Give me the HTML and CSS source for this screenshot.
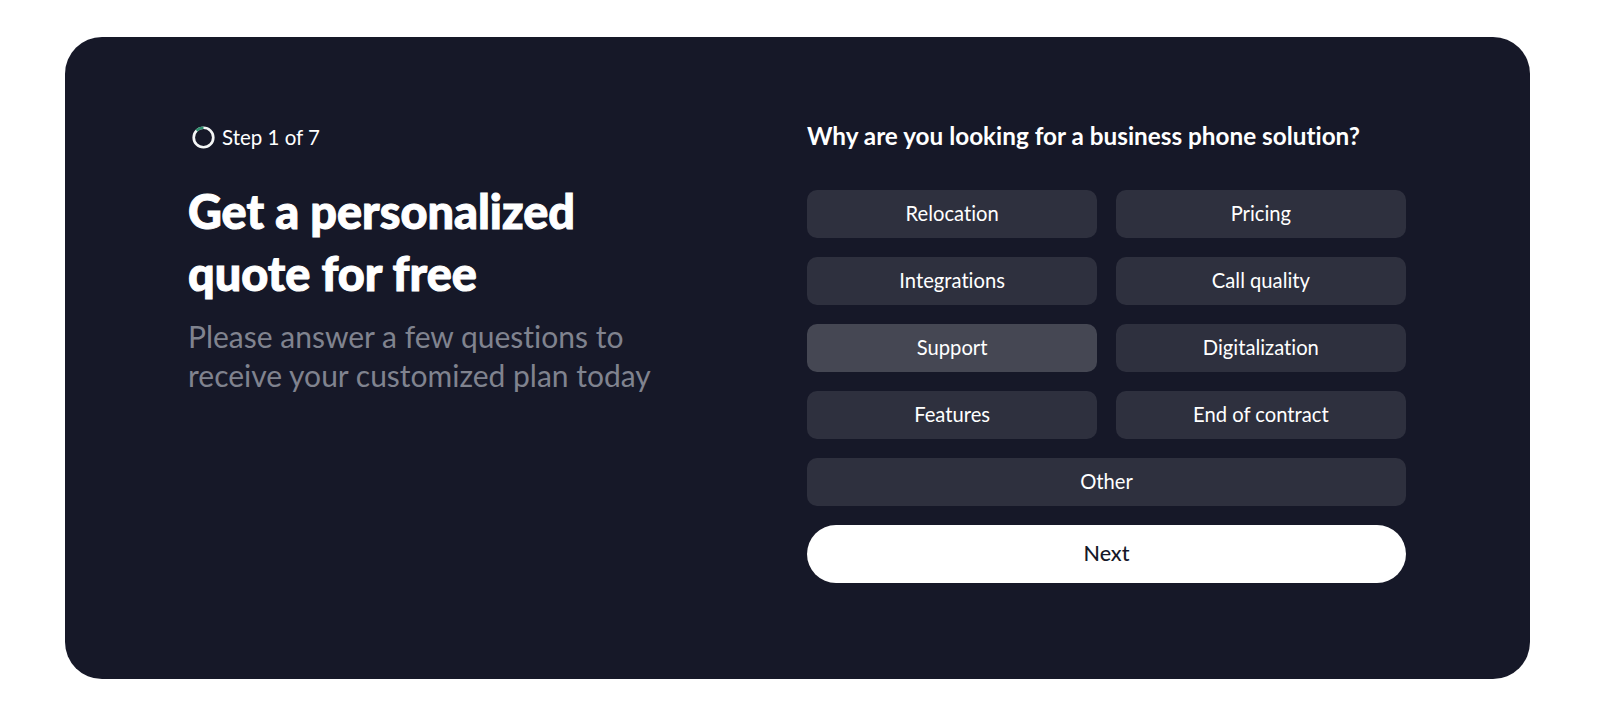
FILE: index.html
```html
<!DOCTYPE html>
<html lang="en">
<head>
  <meta charset="UTF-8">
  <title>Get a personalized quote</title>
  <meta name="viewport" content="width=device-width, initial-scale=1.0">
  <link rel="stylesheet" href="styles.css">
</head>
<body>

<div class="card">
  <div class="intro">
    <div class="step">
      <svg class="step-ring" width="23" height="23" viewBox="0 0 24 24" fill="none">
        <circle cx="12" cy="12" r="10.2" stroke="#f4f6f6" stroke-width="2.8"/>
        <path d="M12 1.8A10.2 10.2 0 0 0 4.8 4.8" stroke="#2f8f6f" stroke-width="2.8"/>
      </svg>
      <span>Step 1 of 7</span>
    </div>
    <h1>Get a personalized<br>quote for free</h1>
    <p>Please answer a few questions to<br>receive your customized plan today</p>
  </div>

  <div class="form">
    <h2>Why are you looking for a business phone solution?</h2>
    <div class="options">
      <button class="option">Relocation</button>
      <button class="option">Pricing</button>
      <button class="option">Integrations</button>
      <button class="option">Call quality</button>
      <button class="option hover">Support</button>
      <button class="option">Digitalization</button>
      <button class="option">Features</button>
      <button class="option">End of contract</button>
      <button class="option wide">Other</button>
    </div>
    <button class="next">Next</button>
  </div>
</div>

</body>
</html>
```

FILE: styles.css
```css
body {
  margin: 0;
  padding: 37px 70px 36px 65px;
  background: #fff;
  font-family: 'Lato', 'Liberation Sans', sans-serif;
  font-variant-ligatures: none;
  color: #fff;
}

.card {
  display: flex;
  box-sizing: border-box;
  height: 642px;
  padding: 86px 124px 0;
  background-color: #161828;
  border-radius: 37px;
}

.intro {
  width: 618px;
  flex-shrink: 0;
}

.step {
  display: flex;
  align-items: center;
  gap: 7px;
  height: 28px;
  font-size: 20.5px;
}

.step-ring {
  margin-left: 3px;
}

h1 {
  margin: 29px 0 0 -1px;
  font-size: 46.8px;
  font-weight: 900;
  line-height: 62px;
  -webkit-text-stroke: 1px #fff;
}

.intro p {
  margin: 13px 0 0 -1px;
  font-size: 30px;
  line-height: 39px;
  color: #80838f;
}

.form {
  width: 599px;
}

h2 {
  margin: 0 0 39px;
  height: 28px;
  font-size: 24.3px;
  font-weight: 700;
  line-height: 26px;
}

.options {
  display: grid;
  grid-template-columns: 1fr 1fr;
  gap: 19px 18.5px;
}

button {
  font-family: inherit;
  font-variant-ligatures: none;
  border: 0;
  cursor: pointer;
}

.option {
  height: 48px;
  padding: 0 0 3px;
  background-color: #2e303e;
  border-radius: 10px;
  color: #fff;
  font-size: 20.2px;
}

.option.hover {
  background-color: #454753;
}

.option.wide {
  grid-column: 1 / 3;
}

.next {
  display: block;
  width: 100%;
  height: 58px;
  margin-top: 19px;
  padding: 0 0 2px;
  background-color: #fff;
  border-radius: 29px;
  color: #161828;
  font-size: 21.5px;
  font-weight: 500;
}
```
